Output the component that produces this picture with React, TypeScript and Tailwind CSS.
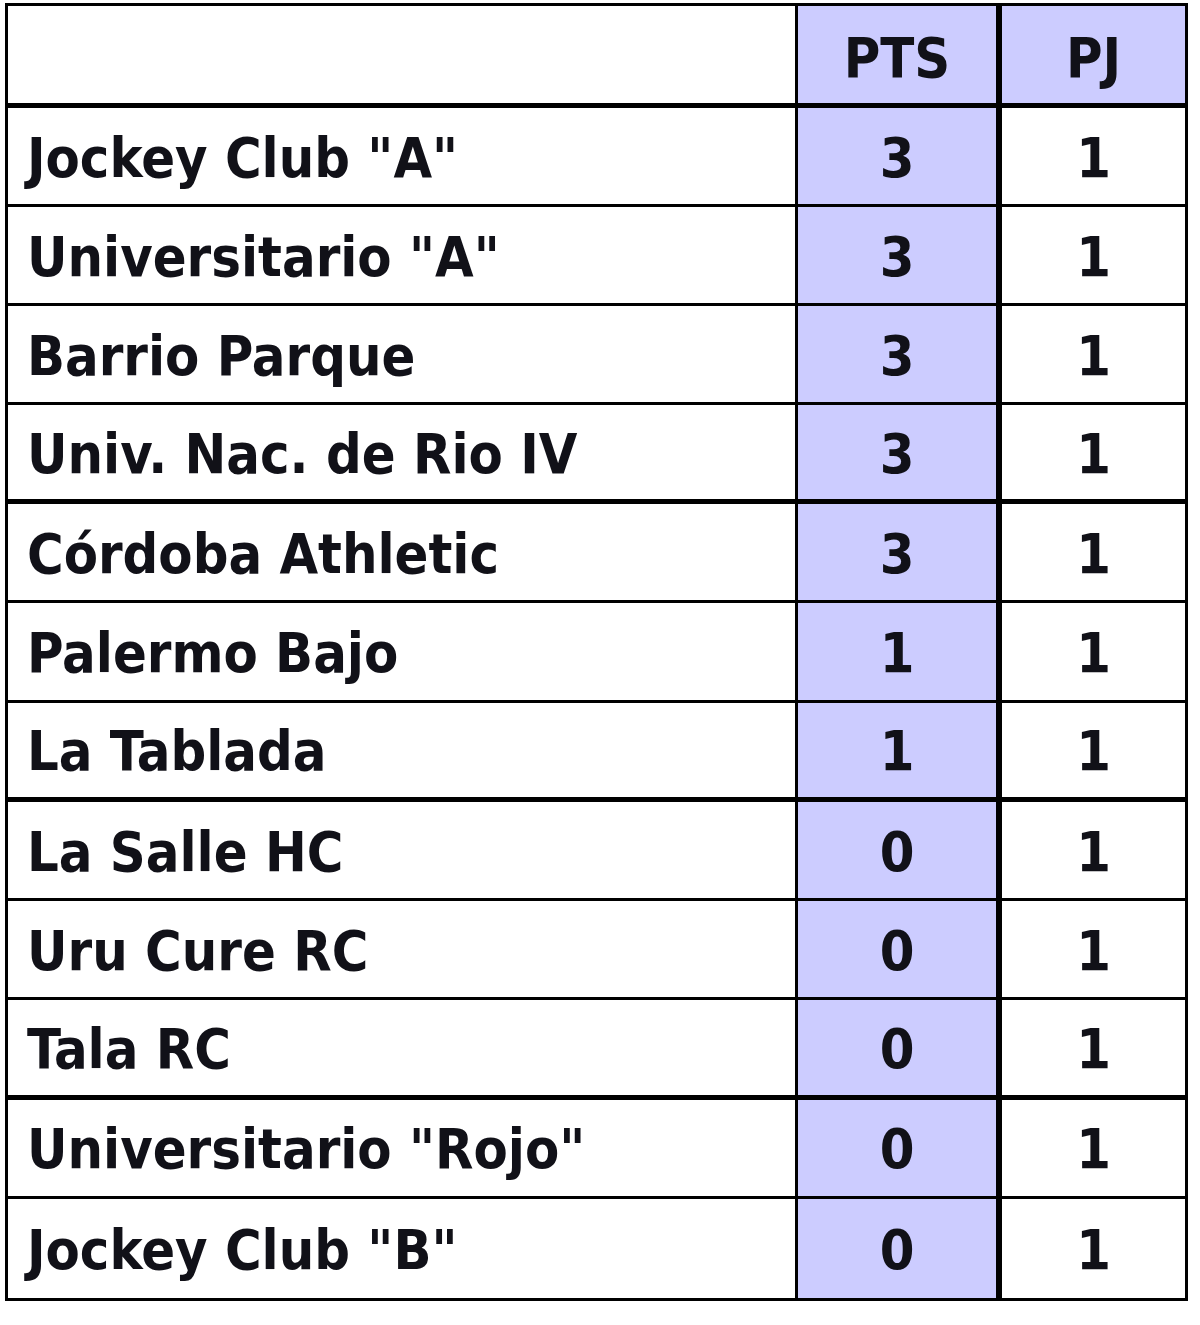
type Row = { team: string; pts: number; pj: number; thick?: boolean };

const rows: Row[] = [
  { team: 'Jockey Club "A"', pts: 3, pj: 1 },
  { team: 'Universitario "A"', pts: 3, pj: 1 },
  { team: "Barrio Parque", pts: 3, pj: 1 },
  { team: "Univ. Nac. de Rio IV", pts: 3, pj: 1, thick: true },
  { team: "Córdoba Athletic", pts: 3, pj: 1 },
  { team: "Palermo Bajo", pts: 1, pj: 1 },
  { team: "La Tablada", pts: 1, pj: 1, thick: true },
  { team: "La Salle HC", pts: 0, pj: 1 },
  { team: "Uru Cure RC", pts: 0, pj: 1 },
  { team: "Tala RC", pts: 0, pj: 1, thick: true },
  { team: 'Universitario "Rojo"', pts: 0, pj: 1 },
  { team: 'Jockey Club "B"', pts: 0, pj: 1 },
];

const font = { fontFamily: '"DejaVu Sans Condensed", "DejaVu Sans", Tahoma, sans-serif' };

export default function App() {
  return (
    <main className="min-h-screen bg-white pt-[3px] pl-[5px]" style={font}>
      <div className="w-[1183px] border-[3px] border-black text-[55.5px] font-bold leading-none text-[#111118]">
        <div className="grid grid-cols-[790px_204px_183px] h-[102px] border-b-[5px] border-black">
          <div className="border-r-[3px] border-black" />
          <div className="flex items-center justify-center pt-[6px] bg-[#ccccff] border-r-[6px] border-black">PTS</div>
          <div className="flex items-center justify-center pt-[6px] bg-[#ccccff]">PJ</div>
        </div>

        {rows.map((r, i) => {
          const last = i === rows.length - 1;
          const bottom = last ? "" : r.thick ? "border-b-[5px] border-black" : "border-b-[3px] border-black";
          const height = i < 4 ? "h-[99px]" : "h-[99.25px]";
          return (
            <div key={r.team} className={`grid grid-cols-[790px_204px_183px] ${height} ${bottom}`}>
              <div className="flex items-center pl-[19px] pt-[3px] border-r-[3px] border-black">{r.team}</div>
              <div className="flex items-center justify-center pt-[3px] bg-[#ccccff] border-r-[6px] border-black">{r.pts}</div>
              <div className="flex items-center justify-center pt-[3px]">{r.pj}</div>
            </div>
          );
        })}
      </div>
    </main>
  );
}
